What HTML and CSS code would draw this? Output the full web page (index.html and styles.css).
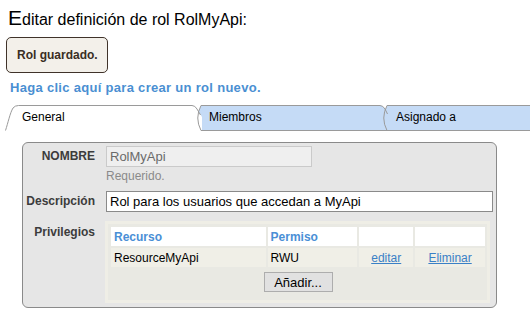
FILE: index.html
```html
<!DOCTYPE html>
<html lang="es">
<head>
  <meta charset="UTF-8">
  <title>Editar definición de rol</title>
  <link rel="stylesheet" href="styles.css">
</head>
<body>
  <h1 class="title"><span class="big">E</span>ditar definición de rol RolMyApi:</h1>
  <div class="notice">Rol guardado.</div>
  <a class="new-link" href="#">Haga clic aquí para crear un rol nuevo.</a>

  <div class="tabs">
    <svg class="tabs-bg" width="530" height="27" viewBox="0 0 530 27">
      <path class="tab-off" d="M387,1.5 L530,1.5 L530,26.5 L387,26.5 Q380.5,14 387,1.5 Z"/>
      <path class="tab-off" d="M201,1.5 L380,1.5 Q383,1.5 385,5 L390,13 L390,26.5 L201,26.5 Q194.5,14 201,1.5 Z"/>
      <path class="tab-on" d="M5,27 C8,19 10,9 13,4 Q15,1.5 18.5,1.5 L192,1.5 Q195,1.5 197,5 L202,13 L202,27 Z"/>
      <path class="edge" d="M5.5,26.5 C8,19 10,9 13,4 Q15,1.5 18.5,1.5 L192,1.5 Q195,1.5 197,5 L200.5,11"/>
      <path class="edge" d="M201,26.5 Q194.5,14 201,1.5 L380,1.5 Q383,1.5 385,5 L387.5,10"/>
      <path class="edge" d="M387,26.5 Q380.5,14 387,1.5 L530,1.5"/>
      <path class="edge" d="M201,26.5 L530,26.5"/>
    </svg>
    <span class="tab tab-general">General</span>
    <span class="tab tab-members">Miembros</span>
    <span class="tab tab-assigned">Asignado a</span>
  </div>

  <div class="panel">
    <div class="field field-name">
      <label class="field-label">NOMBRE</label>
      <div class="field-control">
        <input class="input input-readonly" type="text" value="RolMyApi" readonly>
        <div class="hint">Requerido.</div>
      </div>
    </div>
    <div class="field field-desc">
      <label class="field-label">Descripción</label>
      <div class="field-control">
        <input class="input input-wide" type="text" value="Rol para los usuarios que accedan a MyApi">
      </div>
    </div>
    <div class="field field-priv">
      <label class="field-label">Privilegios</label>
      <div class="priv-box">
        <table class="priv-table">
          <colgroup>
            <col class="col-res">
            <col class="col-perm">
            <col class="col-edit">
            <col class="col-del">
          </colgroup>
          <tr class="head-row">
            <th>Recurso</th>
            <th>Permiso</th>
            <th></th>
            <th></th>
          </tr>
          <tr class="data-row">
            <td>ResourceMyApi</td>
            <td>RWU</td>
            <td class="action"><a href="#">editar</a></td>
            <td class="action"><a href="#">Eliminar</a></td>
          </tr>
        </table>
        <div class="add-row">
          <button class="add-btn">Añadir...</button>
        </div>
      </div>
    </div>
  </div>
</body>
</html>
```

FILE: styles.css
```css
body {
  margin: 0;
  background-color: white;
  color: black;
  font-family: "Liberation Sans", Arial, sans-serif;
  font-size: 12px;
}
.title {
  margin: 0;
  padding: 8px 0 0 8px;
  font-size: 16px;
  font-weight: normal;
  line-height: 24px;
}
.title .big {
  font-size: 21px;
  line-height: 20px;
}
.notice {
  display: inline-block;
  margin: 5px 0 0 6px;
  padding: 0 9px 0 10px;
  line-height: 34px;
  border: 1px solid #40332a;
  border-radius: 5px;
  background-color: #f3f0ea;
  color: #3a2e24;
  font-weight: bold;
  font-size: 12px;
}
.new-link {
  display: block;
  margin: 7px 0 0 10px;
  line-height: 16px;
  font-size: 13px;
  font-weight: bold;
  letter-spacing: 0.3px;
  color: #4a8fd2;
  text-decoration: none;
}
.tabs {
  position: relative;
  display: flex;
  height: 27px;
  margin-top: 8px;
  line-height: 27px;
  font-size: 12px;
}
.tabs-bg {
  position: absolute;
  left: 0;
  top: 0;
}
.tab-on {
  fill: white;
}
.tab-off {
  fill: #c5dbf6;
}
.edge {
  fill: none;
  stroke: #9a9a9a;
  stroke-width: 1;
}
.tab {
  position: relative;
  box-sizing: border-box;
}
.tab-general {
  width: 200px;
  padding-left: 22px;
}
.tab-members {
  width: 187px;
  padding-left: 9px;
}
.tab-assigned {
  padding-left: 9px;
}
.panel {
  width: 475px;
  box-sizing: border-box;
  margin: 11px 0 0 22px;
  padding: 3px 3px 4px 0;
  border: 1px solid #8a8a8a;
  border-radius: 6px;
  background-color: #e6e6e6;
}
.field {
  display: flex;
  column-gap: 11px;
}
.field-label {
  flex: 0 0 72px;
  text-align: right;
  font-weight: bold;
  color: #3c3c3c;
  font-size: 12px;
  line-height: 21px;
}
.field-control {
  flex: 1;
}
.input {
  box-sizing: border-box;
  height: 21px;
  margin: 0;
  padding: 0 3px;
  font-family: "Liberation Sans", Arial, sans-serif;
  font-size: 13px;
  outline: none;
}
.input-readonly {
  width: 206px;
  background-color: #efefef;
  border: 1px solid #cacaca;
  color: #6a6a6a;
}
.input-wide {
  width: 100%;
  background-color: white;
  border: 1px solid #8a8a8a;
  color: black;
}
.hint {
  margin-top: 2px;
  line-height: 14px;
  font-size: 12px;
  color: #8a8a8a;
}
.field-desc {
  margin-top: 8px;
}
.field-priv {
  margin-top: 9px;
}
.field-priv .field-label {
  padding-top: 3px;
  line-height: 16px;
}
.priv-box {
  flex: 0 0 385px;
  box-sizing: border-box;
  margin-left: -1px;
  padding: 1px 0 1px 1px;
  border: 3px solid #efeee6;
  background-color: #e9e9e3;
}
.priv-table {
  border-spacing: 2px;
  font-size: 12px;
}
.col-res {
  width: 155px;
}
.col-perm {
  width: 90px;
}
.col-edit {
  width: 54px;
}
.col-del {
  width: 70px;
}
.priv-table th,
.priv-table td {
  height: 19px;
  padding: 0 0 0 3px;
  text-align: left;
}
.head-row th {
  background-color: white;
  color: #4a8fd6;
  font-weight: bold;
}
.data-row td {
  background-color: #f0efe7;
}
.priv-table td.action {
  text-align: center;
  padding: 0;
}
.action a {
  color: #3a80c6;
}
.add-row {
  display: flex;
  justify-content: center;
  margin: 3px 0 7px;
}
.add-btn {
  width: 69px;
  height: 20px;
  padding: 0;
  border: 1px solid #adadad;
  background-color: #e1e1e1;
  font-family: "Liberation Sans", Arial, sans-serif;
  font-size: 13px;
  color: black;
}
```
